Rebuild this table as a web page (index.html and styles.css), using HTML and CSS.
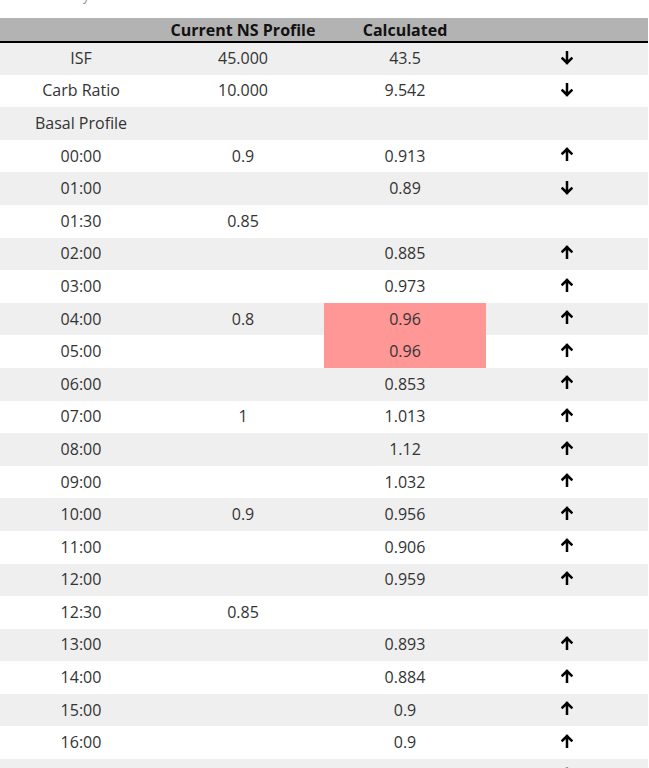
FILE: index.html
```html
<!DOCTYPE html>
<html>
<head>
<meta charset="utf-8">
<link rel="stylesheet" href="styles.css">
</head>
<body>
<p class="intro">Summary</p>
<table class="profile">
  <thead>
    <tr><th></th><th>Current NS Profile</th><th>Calculated</th><th></th></tr>
  </thead>
  <tbody>
    <tr><td>ISF</td><td>45.000</td><td>43.5</td><td><svg class="arr" viewBox="0 0 12 14"><path d="M6 1V12M1.5 7.5L6 12L10.5 7.5"/></svg></td></tr>
    <tr><td>Carb Ratio</td><td>10.000</td><td>9.542</td><td><svg class="arr" viewBox="0 0 12 14"><path d="M6 1V12M1.5 7.5L6 12L10.5 7.5"/></svg></td></tr>
    <tr><td>Basal Profile</td><td></td><td></td><td></td></tr>
    <tr><td>00:00</td><td>0.9</td><td>0.913</td><td><svg class="arr up" viewBox="0 0 12 14"><path d="M6 13V2M1.5 6.5L6 2L10.5 6.5"/></svg></td></tr>
    <tr><td>01:00</td><td></td><td>0.89</td><td><svg class="arr" viewBox="0 0 12 14"><path d="M6 1V12M1.5 7.5L6 12L10.5 7.5"/></svg></td></tr>
    <tr><td>01:30</td><td>0.85</td><td></td><td></td></tr>
    <tr><td>02:00</td><td></td><td>0.885</td><td><svg class="arr up" viewBox="0 0 12 14"><path d="M6 13V2M1.5 6.5L6 2L10.5 6.5"/></svg></td></tr>
    <tr><td>03:00</td><td></td><td>0.973</td><td><svg class="arr up" viewBox="0 0 12 14"><path d="M6 13V2M1.5 6.5L6 2L10.5 6.5"/></svg></td></tr>
    <tr><td>04:00</td><td>0.8</td><td class="warn">0.96</td><td><svg class="arr up" viewBox="0 0 12 14"><path d="M6 13V2M1.5 6.5L6 2L10.5 6.5"/></svg></td></tr>
    <tr><td>05:00</td><td></td><td class="warn">0.96</td><td><svg class="arr up" viewBox="0 0 12 14"><path d="M6 13V2M1.5 6.5L6 2L10.5 6.5"/></svg></td></tr>
    <tr><td>06:00</td><td></td><td>0.853</td><td><svg class="arr up" viewBox="0 0 12 14"><path d="M6 13V2M1.5 6.5L6 2L10.5 6.5"/></svg></td></tr>
    <tr><td>07:00</td><td>1</td><td>1.013</td><td><svg class="arr up" viewBox="0 0 12 14"><path d="M6 13V2M1.5 6.5L6 2L10.5 6.5"/></svg></td></tr>
    <tr><td>08:00</td><td></td><td>1.12</td><td><svg class="arr up" viewBox="0 0 12 14"><path d="M6 13V2M1.5 6.5L6 2L10.5 6.5"/></svg></td></tr>
    <tr><td>09:00</td><td></td><td>1.032</td><td><svg class="arr up" viewBox="0 0 12 14"><path d="M6 13V2M1.5 6.5L6 2L10.5 6.5"/></svg></td></tr>
    <tr><td>10:00</td><td>0.9</td><td>0.956</td><td><svg class="arr up" viewBox="0 0 12 14"><path d="M6 13V2M1.5 6.5L6 2L10.5 6.5"/></svg></td></tr>
    <tr><td>11:00</td><td></td><td>0.906</td><td><svg class="arr up" viewBox="0 0 12 14"><path d="M6 13V2M1.5 6.5L6 2L10.5 6.5"/></svg></td></tr>
    <tr><td>12:00</td><td></td><td>0.959</td><td><svg class="arr up" viewBox="0 0 12 14"><path d="M6 13V2M1.5 6.5L6 2L10.5 6.5"/></svg></td></tr>
    <tr><td>12:30</td><td>0.85</td><td></td><td></td></tr>
    <tr><td>13:00</td><td></td><td>0.893</td><td><svg class="arr up" viewBox="0 0 12 14"><path d="M6 13V2M1.5 6.5L6 2L10.5 6.5"/></svg></td></tr>
    <tr><td>14:00</td><td></td><td>0.884</td><td><svg class="arr up" viewBox="0 0 12 14"><path d="M6 13V2M1.5 6.5L6 2L10.5 6.5"/></svg></td></tr>
    <tr><td>15:00</td><td></td><td>0.9</td><td><svg class="arr up" viewBox="0 0 12 14"><path d="M6 13V2M1.5 6.5L6 2L10.5 6.5"/></svg></td></tr>
    <tr><td>16:00</td><td></td><td>0.9</td><td><svg class="arr up" viewBox="0 0 12 14"><path d="M6 13V2M1.5 6.5L6 2L10.5 6.5"/></svg></td></tr>
    <tr><td>17:00</td><td></td><td>0.9</td><td><svg class="arr up" viewBox="0 0 12 14"><path d="M6 13V2M1.5 6.5L6 2L10.5 6.5"/></svg></td></tr>
  </tbody>
</table>
</body>
</html>
```
FILE: styles.css
```css
html, body {
  margin: 0;
  padding: 0;
  background: #ffffff;
  font-family: "Open Sans", "Segoe UI", sans-serif;
  color: #333333;
}
.intro {
  margin: -14px 0 0 0;
  padding: 0 0 0 27px;
  height: 32px;
  font-size: 14px;
  line-height: 18px;
  color: #999999;
}
.profile {
  width: 648px;
  table-layout: fixed;
  border-collapse: collapse;
  font-size: 16px;
}
.profile th {
  height: 23px;
  padding: 0;
  background: #b3b3b3;
  border-bottom: 2px solid #000000;
  font-weight: 700;
  color: #111111;
  text-align: center;
  vertical-align: middle;
  line-height: 22px;
}
.profile td {
  height: 32.6px;
  padding: 0 0 1px 0;
  box-sizing: border-box;
  text-align: center;
  vertical-align: middle;
  line-height: 20px;
}
.profile tbody tr:nth-child(odd) td {
  background: #efefef;
}
.profile tbody tr:nth-child(even) td {
  background: #ffffff;
}
.profile tbody tr td.warn {
  background: #ff9797;
}
.arr {
  display: inline-block;
  width: 12px;
  height: 14px;
  vertical-align: middle;
  fill: none;
  stroke: #000000;
  stroke-width: 2.5;
  stroke-linecap: square;
  position: relative;
  top: -2px;
}
.arr.up {
  top: -3px;
}
```
